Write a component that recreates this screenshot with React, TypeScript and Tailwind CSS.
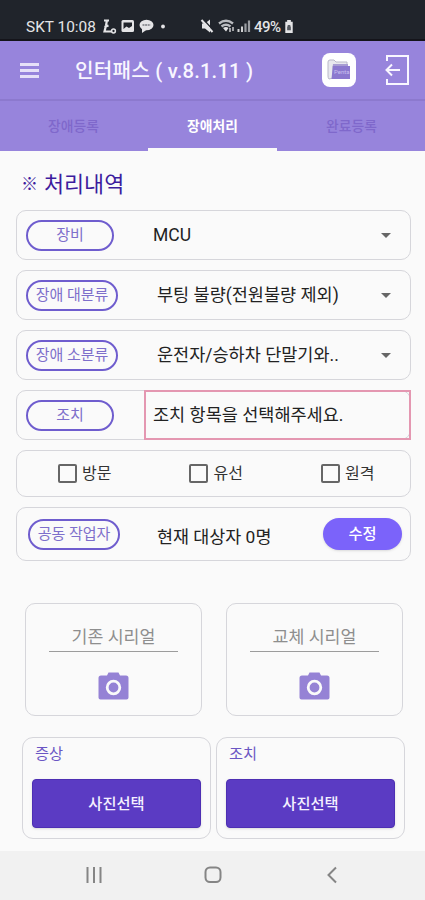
import type { ReactNode } from 'react'
import clsx from 'clsx'

const tabs = ['장애등록', '장애처리', '완료등록']

const selects = [
  { label: '장비', value: 'MCU', wide: false },
  { label: '장애 대분류', value: '부팅 불량(전원불량 제외)', wide: true },
  { label: '장애 소분류', value: '운전자/승하차 단말기와..', wide: true },
]

function StatusBar() {
  return (
    <div className="flex h-[41px] items-start border-b-2 border-[#14141a] bg-[#20242b] pl-[26px] pt-[17px] leading-[20px] text-[#e4e4e6]">
      <span className="w-[75px] whitespace-nowrap text-[15.4px]">SKT 10:08</span>
      <svg className="mt-px h-[17px] w-[64px]" viewBox="0 0 64 17" fill="none">
        <path d="M3 2.5h5M6 2 5 7.5 3.500 13.500h6.500M3.500 9l4-1.500" stroke="#e4e4e6" strokeWidth="2.2" />
        <circle cx="12.500" cy="13" r="1.9" stroke="#e4e4e6" strokeWidth="1.5" />
        <rect x="20.5" y="2" width="12.5" height="12" rx="1.5" fill="#e4e4e6" />
        <path d="M22.5 4.500h8.5v3.500l-3 2-2.500-1.500-3 2.500z" fill="#20242b" />
        <ellipse cx="45.500" cy="7" rx="7" ry="5.300" fill="#e4e4e6" />
        <path d="m41 10 0 5 5-3.500z" fill="#e4e4e6" />
        <path d="M41.500 7h8" stroke="#777a80" strokeWidth="1.600" strokeDasharray="2 .6" />
        <circle cx="62" cy="8.500" r="1.900" fill="#e4e4e6" />
      </svg>
      <svg className="ml-[35px] mt-px h-[17px] w-[54px] shrink-0 overflow-visible" viewBox="0 0 54 17" fill="none">
        <path d="M2 5.500h3l5-4v13l-5-4H2z" fill="#e4e4e6" />
        <path d="m3 1 11 12" stroke="#20242b" strokeWidth="1.500" />
        <path d="m1.500 2 11 12" stroke="#e4e4e6" strokeWidth="2" />
        <path d="M19 5.500q7-5.500 14 0M21.500 8.500q4.500-3.500 9 0" stroke="#b9bbbf" strokeWidth="2.400" />
        <path d="m23 10 3 3.500 2.500-3.500q-2.500-1.800-5.500 0z" fill="#e4e4e6" />
        <path d="M30 10v4M33 9v4" stroke="#e4e4e6" strokeWidth="1.300" />
        <path d="M38.500 11v3M42 8.500V14" stroke="#d0d1d3" strokeWidth="2" />
        <path d="M45.500 5.500V14M49 2.500V14" stroke="#9a9da2" strokeWidth="2.200" />
      </svg>
      <span className="w-[30px] whitespace-nowrap text-[15px] font-medium tracking-[-0.5px]">49%</span>
      <svg className="mt-[3px] h-[13px] w-[10px]" viewBox="0 0 10 14">
        <path d="M3 0h4v2h2v12H1V2h2z" fill="#e4e4e6" />
        <path d="M3 7h4v4H3zM3.600 7V5.500h2.800V7" fill="#555960" />
      </svg>
    </div>
  )
}

function Header() {
  return (
    <header className="flex h-[60px] items-center border-b-2 border-[#8c79ce] bg-[#9784dc] pl-[20px] pr-[15px]">
      <div className="flex w-[19px] flex-col gap-[3px]">
        <div className="h-[3px] bg-[#e6e0f8]" />
        <div className="h-[3px] bg-[#e6e0f8]" />
        <div className="h-[3px] bg-[#e6e0f8]" />
      </div>
      <h1 className="ml-[36px] flex-1 whitespace-nowrap pt-[3px] text-[20.2px] font-medium tracking-[0.2px] text-[#f8f6ff]">
        인터패스 ( v.8.1.11 )
      </h1>
      <div className="flex h-[34px] w-[34px] items-center justify-center rounded-[8px] bg-white">
        <svg className="h-[22px] w-[26px]" viewBox="0 0 26 22">
          <path d="M2 3q0-2 2-2h4l2 2h11v4H7v12l-4 1q-1-1-1-3z" fill="#e8e8ee" stroke="#b9b8c8" />
          <path d="M7 5h15v2h2v13H5.500z" fill="#8b78cf" />
          <path d="M7 6h15" stroke="#c5c2d6" />
          <text x="8" y="15" fontSize="6" fill="#c9bfee">Penta</text>
        </svg>
      </div>
      <svg className="ml-[28px] h-[32px] w-[26px]" viewBox="0 0 26 32" fill="none" stroke="#f8f6ff" strokeWidth="2">
        <path d="M3 7V2h21v28H3v-5" />
        <path d="M16 16H3M8 10.500 2.500 16 8 21.500" />
      </svg>
    </header>
  )
}

function Pill({ children, wide }: { children: ReactNode; wide?: boolean }) {
  return (
    <div
      className={clsx(
        'flex h-[31px] shrink-0 items-center justify-center whitespace-nowrap rounded-full border-2 border-[#6f5dce] pt-px text-[15px] text-[#7e6fcb]',
        wide ? 'w-[92px]' : 'w-[88px]',
      )}
    >
      {children}
    </div>
  )
}

function Serial({ label }: { label: string }) {
  return (
    <div className="flex h-[113px] w-[177px] flex-col items-center rounded-[10px] border-[1.5px] border-[#d6d6db]">
      <div className="mt-[18px] h-[30px] w-[129px] border-b-[1.5px] border-[#9c9c9c] text-center text-[17.3px] leading-[30px] text-[#8e8e8e]">
        {label}
      </div>
      <svg className="mt-[20px] h-[29px] w-[31px]" viewBox="0 0 31 29">
        <path d="M10.500 .5h10L22 3.500h6q2.500 0 2.500 2.500v19.500q0 2-2 2h-26q-2 0-2-2V6q0-2.500 2.500-2.500h6z" fill="#9582d5" />
        <circle cx="15.500" cy="15.500" r="6.300" fill="none" stroke="#fafafa" strokeWidth="2.800" />
      </svg>
    </div>
  )
}

function Photo({ label }: { label: string }) {
  return (
    <div className="h-[102px] w-[189px] rounded-[11px] border-[1.5px] border-[#d6d6db] px-[9px]">
      <div className="h-[41px] pl-[3px] pt-[6px] text-[15.3px] leading-[20px] text-[#6b56c4]">{label}</div>
      <button className="flex h-[49px] w-[169px] items-center justify-center rounded-[4px] border border-[#4d2fb3] bg-[#5b3bc3] pt-[2px] text-[15.3px] font-medium text-[#f4f0ff] shadow-sm">
        사진선택
      </button>
    </div>
  )
}

export default function App() {
  return (
    <div className="flex h-[900px] w-[425px] flex-col overflow-hidden bg-[#fafafa] font-[Roboto,'Noto_Sans_CJK_KR',sans-serif]">
      <StatusBar />
      <Header />

      <nav className="flex h-[50px] shrink-0 justify-center bg-[#9784dc]">
        {tabs.map((tab, i) => (
          <div key={tab} className="flex w-[139px] flex-col items-center">
            <span
              className={clsx(
                'h-[47px] text-[13.8px] leading-[50px]',
                i === 1 ? 'font-bold text-white' : 'font-medium text-[#7f68cb]',
              )}
            >
              {tab}
            </span>
            {i === 1 && <div className="h-[3px] w-[129px] bg-[#fafafa]" />}
          </div>
        ))}
      </nav>

      <main className="h-[700px] shrink-0 pl-[16px]">
        <h2 className="flex h-[59px] items-center gap-[6px] pl-[5px] pt-[9px] text-[21.8px] text-[#3d1c9e]">
          <span className="text-[17px] font-bold">※</span>처리내역
        </h2>

        <div className="flex w-[395px] flex-col gap-[10px]">
          {selects.map((s) => (
            <div key={s.label} className="flex h-[50px] items-center rounded-[10px] border-[1.5px] border-[#d6d6db] pl-[9px]">
              <Pill wide={s.wide}>{s.label}</Pill>
              <span className="flex-1 whitespace-nowrap pl-[39px] pt-px text-[17.5px] text-[#222]">{s.value}</span>
              <div className="mr-[19px] border-x-[5px] border-t-[5px] border-x-transparent border-t-[#666]" />
            </div>
          ))}

          <div className="flex h-[50px] items-center rounded-[10px] border-[1.5px] border-[#d6d6db] pl-[9px]">
            <Pill>조치</Pill>
            <div className="-mr-px ml-auto flex h-[50px] w-[267px] shrink-0 items-center border-2 border-[#e497b1] pl-[7px] pt-px text-[17.5px] text-[#222]">
              조치 항목을 선택해주세요.
            </div>
          </div>

          <div className="flex h-[47px] items-center gap-[78px] rounded-[10px] border-[1.5px] border-[#d6d6db] pl-[41px]">
            {['방문', '유선', '원격'].map((name) => (
              <label key={name} className="flex items-center gap-[5px] whitespace-nowrap text-[16px] text-[#333]">
                <span className="h-[19px] w-[19px] rounded-[2px] border-2 border-[#666]" />
                <span className="pt-px">{name}</span>
              </label>
            ))}
          </div>

          <div className="flex h-[54px] items-center rounded-[10px] border-[1.5px] border-[#d6d6db] pl-[11px] pr-[8px]">
            <Pill wide>공동 작업자</Pill>
            <span className="flex-1 pl-[37px] pt-[6px] text-[17.4px] text-[#222]">현재 대상자 0명</span>
            <button className="h-[32px] w-[79px] rounded-full bg-[#7b63fa] pt-px text-[15.3px] font-medium text-white shadow-sm">
              수정
            </button>
          </div>
        </div>

        <div className="mt-[42px] flex gap-[24px] pl-[9px]">
          <Serial label="기존 시리얼" />
          <Serial label="교체 시리얼" />
        </div>

        <div className="mt-[21px] flex gap-[5px] pl-[6px]">
          <Photo label="증상" />
          <Photo label="조치" />
        </div>
      </main>

      <footer className="flex h-[49px] shrink-0 items-start bg-[#f1f1f1] pt-[15px]">
        <svg className="ml-[85px] h-[18px] w-[18px]" viewBox="0 0 18 18" stroke="#858585" strokeWidth="2">
          <path d="M2.500 1v16M9 1v16M15.500 1v16" />
        </svg>
        <svg className="ml-[101px] h-[18px] w-[18px]" viewBox="0 0 18 18" fill="none" stroke="#858585" strokeWidth="2">
          <rect x="1.500" y="1.500" width="15" height="14.500" rx="4.500" />
        </svg>
        <svg className="ml-[103px] h-[18px] w-[14px]" viewBox="0 0 14 18" fill="none" stroke="#858585" strokeWidth="2">
          <path d="M11 1.500 3.500 9l7.500 7.500" />
        </svg>
      </footer>
    </div>
  )
}
